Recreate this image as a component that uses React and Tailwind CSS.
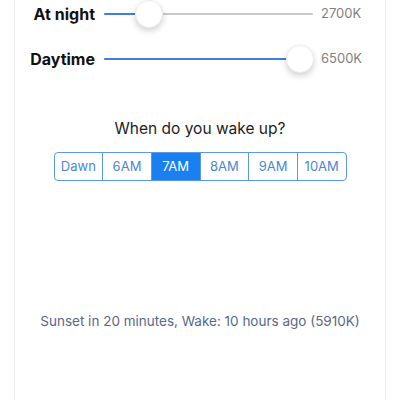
import React from 'react';

const Slider = ({ pos, width }) => (
  <div className="relative h-[28px]" style={{ width }}>
    <div className="absolute left-0 right-0 top-[13px] h-[2px] bg-[#c9c9cb] rounded-full" />
    <div className="absolute left-0 top-[13px] h-[2px] bg-[#3d7fd9] rounded-full" style={{ width: pos }} />
    <div
      className="absolute top-0 w-[28px] h-[28px] rounded-full bg-white border border-[#ececec] shadow-[0_3px_6px_rgba(0,0,0,0.18)]"
      style={{ left: pos - 14 }}
    />
  </div>
);

const Row = ({ label, value, pos }) => (
  <div className="flex items-center h-[28px]">
    <div className="w-[80px] text-right text-[16px] font-bold text-[#111]">{label}</div>
    <div className="ml-[9px]">
      <Slider pos={pos} width={209} />
    </div>
    <div className="ml-[8px] text-[13px] text-[#7f7f81]">{value}</div>
  </div>
);

const times = ['Dawn', '6AM', '7AM', '8AM', '9AM', '10AM'];

export default function App() {
  return (
    <div className="w-[400px] h-[400px] bg-white overflow-hidden" style={{ fontFamily: 'Inter, "Noto Sans", sans-serif' }}>
      <div className="mx-[14px] h-full border-x border-[#ededed] bg-white">
        <Row label="At night" value="2700K" pos={45} />
        <div className="mt-[17px]">
          <Row label="Daytime" value="6500K" pos={196} />
        </div>

        <div className="mt-[46px] text-center text-[15.5px] leading-[20px] text-[#1c1c1e]">When do you wake up?</div>

        <div className="mt-[13px] mx-auto w-[293px] h-[29px] flex border border-[#5b98e4] rounded-[4px] overflow-hidden">
          {times.map((t, i) => (
            <div
              key={t}
              className={
                'flex-1 flex items-center justify-center text-[13px] ' +
                (i > 0 ? 'border-l border-[#5b98e4] ' : '') +
                (t === '7AM' ? 'bg-[#1a7ff0] text-white' : 'text-[#4d86d2]')
              }
            >
              {t}
            </div>
          ))}
        </div>

        <div className="mt-[130px] text-center text-[13.5px] leading-[20px] text-[#56698a]">
          Sunset in 20 minutes, Wake: 10 hours ago (5910K)
        </div>
      </div>
    </div>
  );
}
